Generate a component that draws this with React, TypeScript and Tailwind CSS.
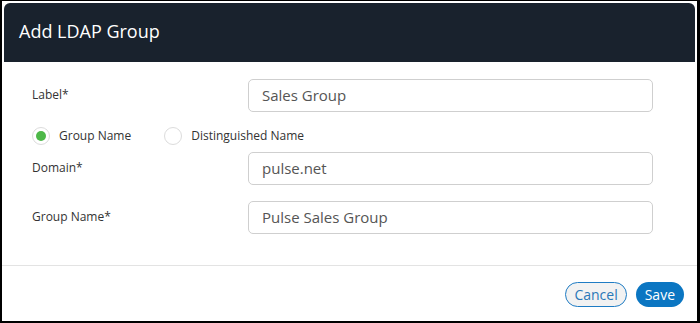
import React from "react";

const font = { fontFamily: '"Open Sans", "Noto Sans", sans-serif' };

function Field({ label, value }: { label: string; value: string }) {
  return (
    <div className="flex items-center">
      <div className="w-[216px] text-[12px] text-[#333] -mt-[2px]">{label}</div>
      <div className="w-[405px] h-[33px] rounded-[5px] border border-[#cfcfcf] flex items-center pl-[13px] text-[15px] text-[#555]">
        {value}
      </div>
    </div>
  );
}

function Radio({ checked, label }: { checked?: boolean; label: string }) {
  return (
    <div className="flex items-center">
      <div className="w-[18px] h-[18px] rounded-full border border-[#dcdcdc] bg-white flex items-center justify-center">
        {checked && <div className="w-[10px] h-[10px] rounded-full bg-[#4db848]" />}
      </div>
      <span className="ml-[9px] text-[12px] text-[#333]">{label}</span>
    </div>
  );
}

export default function App() {
  return (
    <div style={font} className="w-[700px] h-[323px] bg-black p-[2px] pr-[3px] pt-px">
      <div className="w-full h-full bg-white pt-[2px] px-px flex flex-col">
        <div className="h-[59px] bg-[#19222d] rounded-t-[6px] flex items-center pl-[15px] mx-px">
          <span className="text-white text-[18px] -mt-[2px]">Add LDAP Group</span>
        </div>
        <div className="pl-[29px] pt-[17px] flex flex-col">
          <Field label="Label*" value="Sales Group" />
          <div className="h-[40px] flex items-center gap-[33px] pt-[8px]">
            <Radio checked label="Group Name" />
            <Radio label="Distinguished Name" />
          </div>
          <Field label="Domain*" value="pulse.net" />
          <div className="h-[16px]" />
          <Field label="Group Name*" value="Pulse Sales Group" />
        </div>
        <div className="mt-[31px] border-t border-[#e3e3e3] -mx-px" />
        <div className="flex justify-end items-center gap-[9px] pr-[12px] pt-[16px]">
          <button className="h-[25px] px-[8px] rounded-full border border-[#1f7cc4] bg-[#f2f2f2] text-[#2a78b8] text-[14px] leading-none">
            Cancel
          </button>
          <button className="h-[25px] px-[9px] rounded-full bg-[#0b76c2] text-white text-[14px] leading-none">
            Save
          </button>
        </div>
      </div>
    </div>
  );
}
